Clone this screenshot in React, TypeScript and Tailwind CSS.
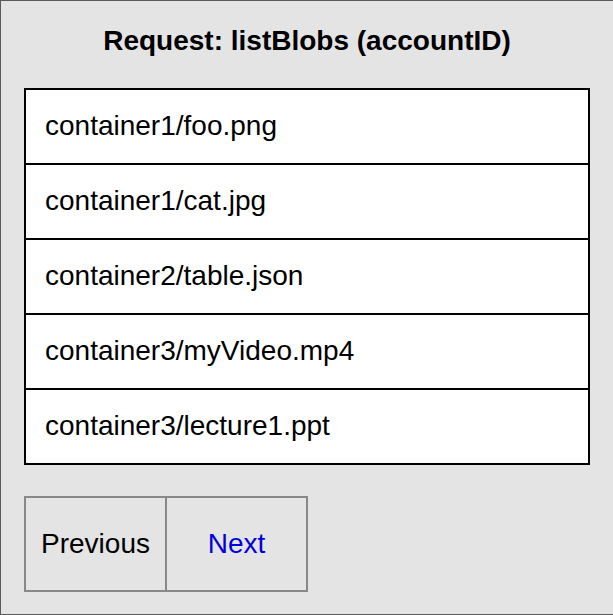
const BLOBS = [
  "container1/foo.png",
  "container1/cat.jpg",
  "container2/table.json",
  "container3/myVideo.mp4",
  "container3/lecture1.ppt",
];

export default function App() {
  return (
    <div className="h-[615px] w-[613px] border-y border-l border-[#5a5a5a] bg-[#e4e4e4] font-['Liberation_Sans',Arial,sans-serif] text-black">
      <div className="flex h-[87px] items-center justify-center pb-[7px] text-[28px] font-bold">
        Request: listBlobs (accountID)
      </div>

      <div className="ml-[23px] w-[566px] border-2 border-black bg-white">
        {BLOBS.map((b, i) => (
          <div
            key={b}
            className={`flex items-center pb-[2px] pl-[19px] text-[28px] ${
              i < BLOBS.length - 1 ? "h-[75px] border-b-2 border-black" : "h-[73px]"
            }`}
          >
            {b}
          </div>
        ))}
      </div>

      <div className="ml-[23px] mt-[31px] flex h-[96px] w-[284px] border-2 border-[#888]">
        <button className="flex-1 border-r-2 border-[#888] text-[28px] text-black">Previous</button>
        <button className="flex-1 text-[28px] text-[#0000dd]">Next</button>
      </div>
    </div>
  );
}
